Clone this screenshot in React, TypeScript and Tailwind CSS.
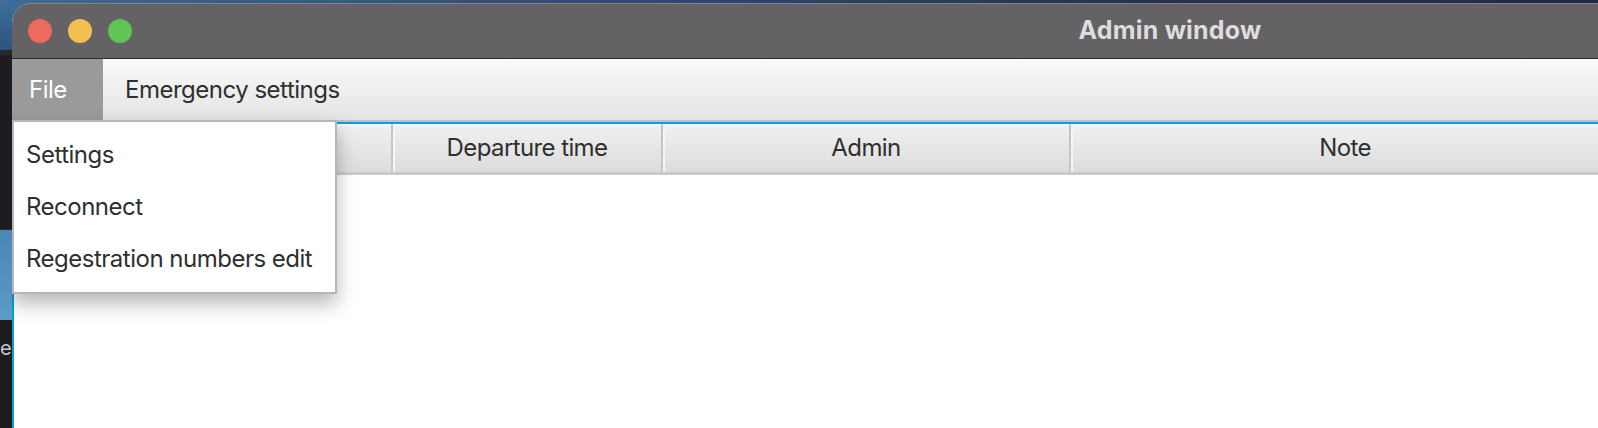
import React from "react";

const menuItems = ["Settings", "Reconnect", "Regestration numbers edit"];

const columns = [
  { label: "", width: "w-[379px]" },
  { label: "Departure time", width: "w-[270px]" },
  { label: "Admin", width: "w-[408px]" },
  { label: "Note", width: "w-[550px]" },
];

const TrafficLights = () => (
  <div className="flex items-center gap-4 pl-4">
    <span className="w-6 h-6 rounded-full bg-[#ed6a5e]" />
    <span className="w-6 h-6 rounded-full bg-[#f5bf4f]" />
    <span className="w-6 h-6 rounded-full bg-[#61c554]" />
  </div>
);

const App = () => {
  return (
    <div
      className="w-[1598px] h-[428px] overflow-hidden flex bg-[#1c1c1f]"
      style={{ fontFamily: "Inter, 'Noto Sans', sans-serif" }}
    >
      {/* desktop strip behind the window */}
      <div className="w-[12px] shrink-0 flex flex-col">
        <div className="h-[50px] bg-gradient-to-b from-[#3f6f9e] to-[#2d547c]" />
        <div className="h-[5px] bg-[#26282e]" />
        <div className="h-[175px] bg-[#1d1d21] border-b border-[#2c2c30]" />
        <div className="h-[90px] bg-gradient-to-b from-[#4a86b4] to-[#5b9bc7]" />
        <div className="flex-1 bg-[#1c1c1e] pt-[18px]">
          <span className="block text-[20px] leading-none text-[#c9c9c9]">e</span>
        </div>
      </div>

      <div className="flex-1 flex flex-col bg-gradient-to-r from-[#3d6a96] via-[#25304f] to-[#1b1b30]">
        <div className="h-[3px] shrink-0" />

        {/* window */}
        <div className="relative w-[2316px] flex-1 flex flex-col rounded-tl-[20px] overflow-hidden bg-white">
          <div className="h-[56px] shrink-0 grid grid-cols-[1fr_auto_1fr] items-center bg-[#646264] border-t border-[#858385] border-b border-b-[#2e2d2e]">
            <TrafficLights />
            <div className="text-[25px] font-bold text-[#dedcde] tracking-[0.2px]">Admin window</div>
            <div />
          </div>

          {/* menu bar */}
          <div className="h-[63px] shrink-0 flex bg-gradient-to-b from-[#fafafa] to-[#e4e4e4] border-b-2 border-[#c2c2c2] text-[24px] tracking-[-0.5px]">
            <div className="w-[91px] flex items-center pl-[17px] bg-[#9a9a9a] text-white">File</div>
            <div className="flex items-center pl-[22px] text-[#2f2f2f]">Emergency settings</div>
          </div>

          {/* table */}
          <div className="flex-1 flex flex-col border-l-2 border-t-2 border-[#0b9ed9]">
            <div className="h-[51px] shrink-0 flex border-b-[3px] border-[#cbcbcb]">
              {columns.map((col, i) => (
                <div
                  key={i}
                  className={`${col.width} shrink-0 flex items-center justify-center bg-gradient-to-b from-[#f1f1f1] to-[#dcdcdc] border-r-2 border-[#c6c6c6] shadow-[inset_2px_2px_0_#f6f6f6] text-[24px] text-[#2f2f2f] tracking-[-0.6px]`}
                >
                  {col.label}
                </div>
              ))}
            </div>
            <div className="flex-1 bg-white" />
          </div>

          {/* open File menu */}
          <div className="absolute left-0 top-[117px] w-[325px] bg-white border-2 border-[#b6b6b6] py-[7px] shadow-[0_10px_18px_rgba(0,0,0,0.28)]">
            {menuItems.map((item) => (
              <div key={item} className="h-[52px] flex items-center pl-[12px] text-[24px] tracking-[-0.5px] text-[#2f2f2f]">
                {item}
              </div>
            ))}
          </div>
        </div>
      </div>
    </div>
  );
};

export default App;
